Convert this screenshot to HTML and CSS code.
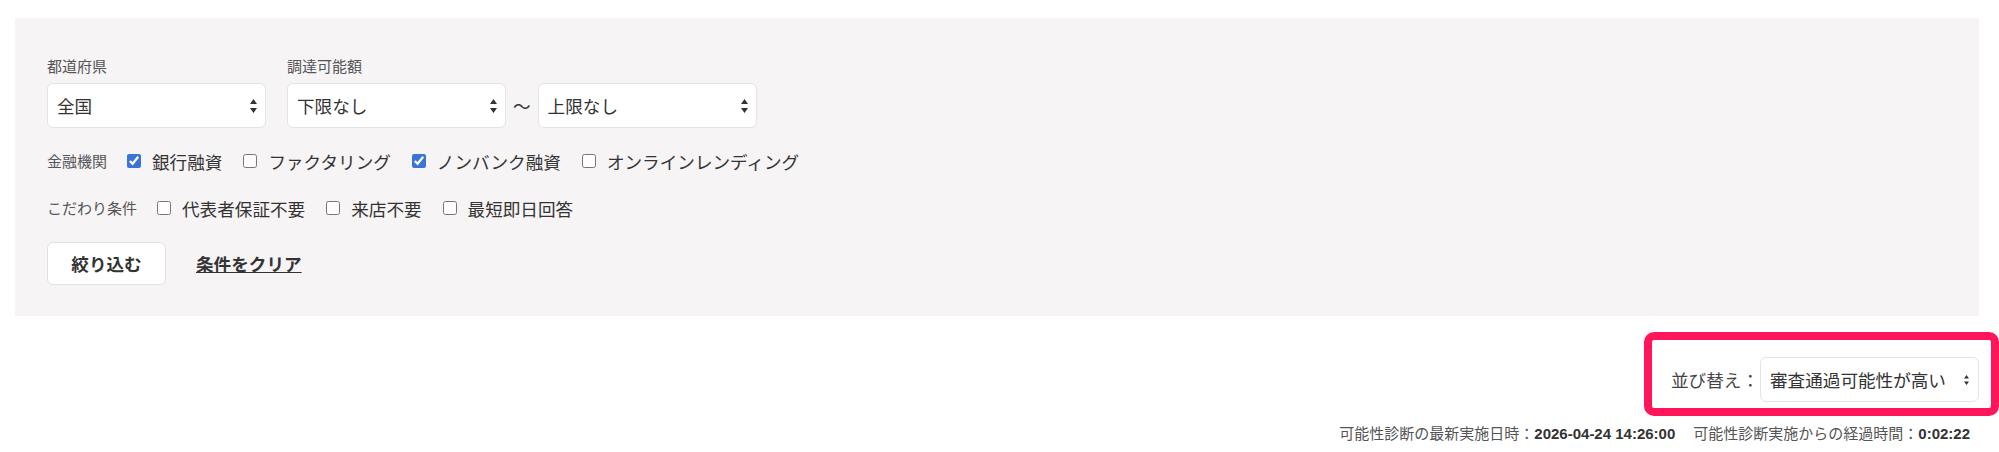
FILE: index.html
```html
<!DOCTYPE html>
<html lang="ja">
<head>
    <meta charset="UTF-8">
    <meta name="viewport" content="width=device-width, initial-scale=1.0">
    <title>絞り込み検索</title>
    <link rel="stylesheet" href="styles.css">
</head>
<body>
    <div class="page">
        <!-- Search Filters -->
        <form class="filter-panel">
            <div class="field-row">
                <div class="field">
                    <span class="field-label">都道府県</span>
                    <div class="select-wrap">
                        <select class="select">
                            <option>全国</option>
                        </select>
                        <svg class="select-arrow" viewBox="0 0 7 14"><path d="M3.5 0 L7 5 L0 5 Z M0 9 L7 9 L3.5 14 Z"/></svg>
                    </div>
                </div>
                <div class="field">
                    <span class="field-label">調達可能額</span>
                    <div class="range">
                        <div class="select-wrap">
                            <select class="select">
                                <option>下限なし</option>
                            </select>
                            <svg class="select-arrow" viewBox="0 0 7 14"><path d="M3.5 0 L7 5 L0 5 Z M0 9 L7 9 L3.5 14 Z"/></svg>
                        </div>
                        <span class="tilde">〜</span>
                        <div class="select-wrap">
                            <select class="select">
                                <option>上限なし</option>
                            </select>
                            <svg class="select-arrow" viewBox="0 0 7 14"><path d="M3.5 0 L7 5 L0 5 Z M0 9 L7 9 L3.5 14 Z"/></svg>
                        </div>
                    </div>
                </div>
            </div>

            <div class="check-row">
                <span class="field-label">金融機関</span>
                <label class="check"><input type="checkbox" checked><span>銀行融資</span></label>
                <label class="check"><input type="checkbox"><span>ファクタリング</span></label>
                <label class="check"><input type="checkbox" checked><span>ノンバンク融資</span></label>
                <label class="check"><input type="checkbox"><span>オンラインレンディング</span></label>
            </div>

            <div class="check-row second">
                <span class="field-label">こだわり条件</span>
                <label class="check"><input type="checkbox"><span>代表者保証不要</span></label>
                <label class="check"><input type="checkbox"><span>来店不要</span></label>
                <label class="check"><input type="checkbox"><span>最短即日回答</span></label>
            </div>

            <div class="actions">
                <button type="button" class="submit-btn">絞り込む</button>
                <a href="#" class="clear-link">条件をクリア</a>
            </div>
        </form>

        <!-- Sort -->
        <div class="sort-bar">
            <span class="sort-label">並び替え：</span>
            <div class="select-wrap">
                <select class="select sort-select">
                    <option>審査通過可能性が高い</option>
                </select>
                <svg class="select-arrow small" viewBox="0 0 7 14"><path d="M3.5 0 L7 5 L0 5 Z M0 9 L7 9 L3.5 14 Z"/></svg>
            </div>
            <div class="highlight"></div>
        </div>

        <p class="diagnosis-info">
            可能性診断の最新実施日時：<b>2026-04-24 14:26:00</b><span class="spacer"></span>可能性診断実施からの経過時間：<b>0:02:22</b>
        </p>
    </div>
</body>
</html>
```

FILE: styles.css
```css
/* General */
body {
    margin: 0;
    background-color: #fff;
    color: #333;
    font-family: "Noto Sans CJK JP", sans-serif;
    overflow-x: hidden;
}

.page {
    padding: 18px 20px 0 15px;
}

/* Filter panel */
.filter-panel {
    background-color: #f6f4f5;
    padding: 38px 32px 31px 32px;
}

.field-row {
    display: flex;
    gap: 21px;
}

.field-label {
    display: block;
    font-size: 15px;
    line-height: 20px;
    color: #555;
}

.field .field-label {
    margin-bottom: 7px;
}

.range {
    display: flex;
    align-items: center;
    gap: 7px;
}

.tilde {
    font-size: 17.6px;
    color: #333;
}

/* Selects */
.select-wrap {
    position: relative;
}

.select {
    appearance: none;
    -webkit-appearance: none;
    display: block;
    width: 219px;
    height: 45px;
    padding: 0 24px 0 9px;
    border: 1px solid #e4e2e3;
    border-radius: 6px;
    background-color: #fff;
    color: #333;
    font-family: inherit;
    font-size: 17.6px;
}

.select-arrow {
    position: absolute;
    right: 9px;
    top: 50%;
    width: 7px;
    height: 14px;
    margin-top: -7px;
    fill: #333;
    pointer-events: none;
}

.select-arrow.small {
    right: 10px;
    width: 5px;
    height: 10px;
    margin-top: -5px;
}

/* Checkbox rows */
.check-row {
    display: flex;
    align-items: center;
    height: 24px;
    margin-top: 21px;
}

.check-row.second {
    margin-top: 23px;
}

.check-row .field-label {
    margin-right: 20px;
}

.check {
    display: flex;
    align-items: center;
    margin-right: 21px;
    font-size: 17.6px;
    color: #333;
}

.check input {
    width: 14px;
    height: 14px;
    margin: 0 11px 0 0;
    accent-color: #3b74d8;
}

/* Actions */
.actions {
    display: flex;
    align-items: center;
    margin-top: 22px;
}

.submit-btn {
    width: 119px;
    height: 43px;
    border: 1px solid #e2e0e1;
    border-radius: 6px;
    background-color: #fff;
    color: #333;
    font-family: inherit;
    font-size: 17.6px;
    font-weight: bold;
    cursor: pointer;
}

.clear-link {
    margin-left: 30px;
    color: #333;
    font-size: 17.6px;
    font-weight: bold;
    text-decoration: underline;
}

/* Sort */
.sort-bar {
    position: relative;
    display: flex;
    justify-content: flex-end;
    align-items: center;
    margin-top: 41px;
    margin-left: auto;
    width: max-content;
}

.sort-label {
    font-size: 17.6px;
    color: #444;
    margin-right: 1px;
}

.highlight {
    position: absolute;
    top: -25px;
    bottom: -14px;
    left: -27px;
    right: -20px;
    border: 8px solid #ff165a;
    border-radius: 10px;
    pointer-events: none;
}

/* Diagnosis info */
.diagnosis-info {
    margin: 21px 0 0;
    padding-right: 9px;
    text-align: right;
    font-family: "Liberation Sans", "Noto Sans CJK JP", sans-serif;
    font-size: 15px;
    line-height: 22px;
    color: #555;
}

.diagnosis-info b {
    color: #333;
}

.spacer {
    display: inline-block;
    width: 18px;
}
```
